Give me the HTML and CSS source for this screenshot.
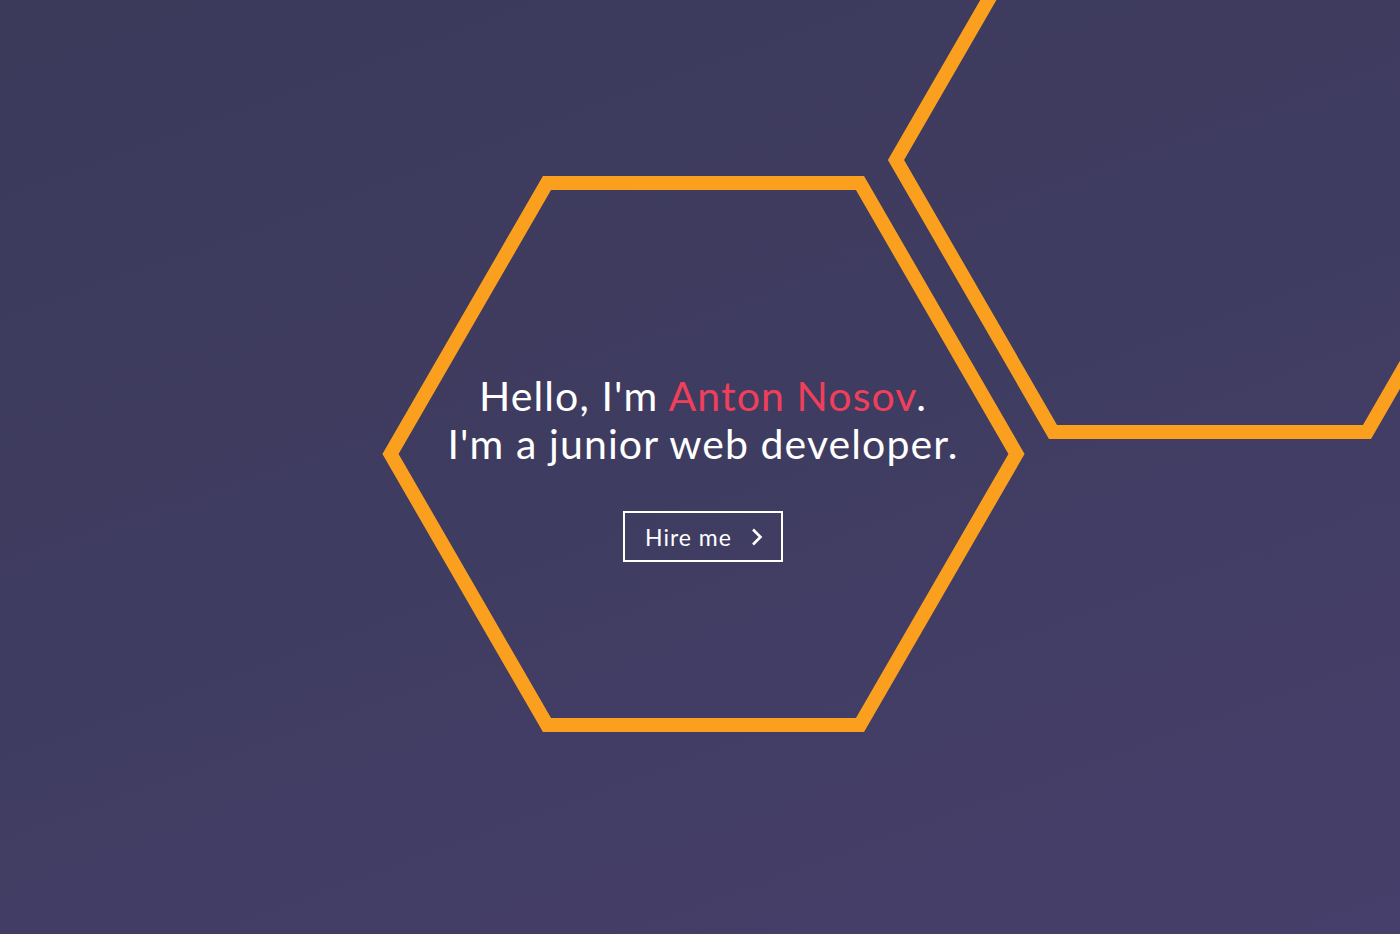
FILE: index.html
```html
<!DOCTYPE html>
<html lang="en">
<head>
<meta charset="utf-8">
<title>Anton Nosov</title>
<link rel="stylesheet" href="styles.css">
</head>
<body>
<section class="hero">
  <svg class="hexes" viewBox="0 0 1400 934" preserveAspectRatio="xMidYMid slice" aria-hidden="true">
    <polygon class="hex" points="390.5,454 547,183 860,183 1016.5,454 860,725 547,725"/>
    <polygon class="hex" points="896,160 1053,-112 1367,-112 1524,160 1367,432 1053,432"/>
  </svg>
  <div class="content">
    <h1 class="headline">Hello, I'm <span class="name">Anton Nosov</span>.<br>I'm a junior web developer.</h1>
    <a class="hire" href="#">Hire me
      <svg class="chev" viewBox="0 0 12 18" aria-hidden="true"><polyline points="2,1.5 9.5,9 2,16.5"/></svg>
    </a>
  </div>
</section>
</body>
</html>
```

FILE: styles.css
```css
html, body {
  margin: 0;
  padding: 0;
  height: 100%;
}
body {
  background: linear-gradient(160deg, #3c3a5b 0%, #3f3c61 50%, #473f6b 100%);
  font-family: "Lato", "Open Sans", sans-serif;
  color: #fff;
  overflow: hidden;
}
.hero {
  position: relative;
  height: 934px;
  display: flex;
  align-items: center;
  justify-content: center;
}
.hexes {
  position: absolute;
  inset: 0;
  width: 100%;
  height: 100%;
}
.hex {
  fill: none;
  stroke: #fba01e;
  stroke-width: 14;
}
.content {
  position: relative;
  display: flex;
  flex-direction: column;
  align-items: center;
  padding-left: 6px;
  padding-top: 0;
}
.headline {
  margin: 0;
  font-weight: 400;
  font-size: 41px;
  line-height: 48px;
  text-align: center;
  letter-spacing: 1.1px;
}
.name {
  color: #ef3f5b;
}
.hire {
  margin-top: 43px;
  display: flex;
  align-items: center;
  gap: 19px;
  box-sizing: border-box;
  width: 160px;
  height: 51px;
  padding-left: 20px;
  border: 2px solid #fff;
  color: #fff;
  text-decoration: none;
  font-size: 23px;
  font-weight: 400;
  letter-spacing: 1px;
}
.chev {
  width: 12px;
  height: 18px;
}
.chev polyline {
  fill: none;
  stroke: #fff;
  stroke-width: 2.6;
}
```
